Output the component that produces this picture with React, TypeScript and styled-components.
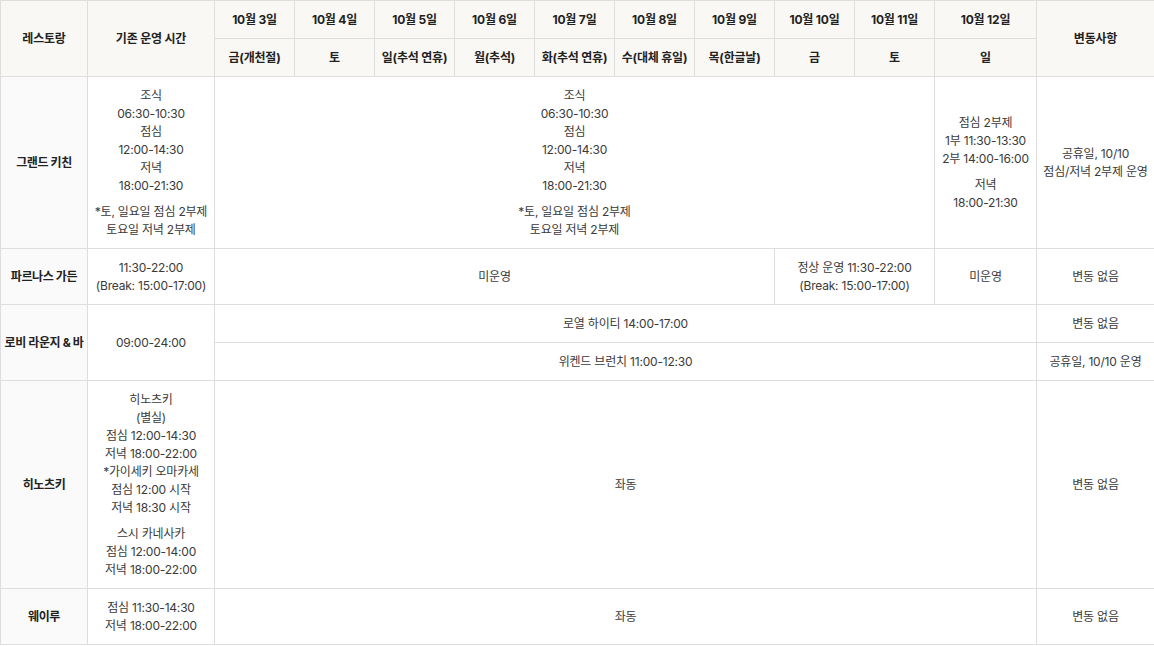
import styled, { createGlobalStyle } from "styled-components";

const GlobalStyle = createGlobalStyle`
    html, body {
        margin: 0;
        padding: 0;
        background: #fff;
    }
    body {
        font-family: Inter, "Noto Sans CJK KR", sans-serif;
        color: #333;
    }
`;

const Table = styled.table`
    width: 1154px;
    table-layout: fixed;
    border-collapse: collapse;
    font-size: 12px;
    line-height: 18px;
    letter-spacing: -0.2px;
    td, th {
        border: 1px solid #dedede;
        text-align: center;
        vertical-align: middle;
        padding: 10px 4px 9px;
    }
`;

const Head = styled.th`
    background: #f9f8f5;
    font-weight: 700;
    color: #222;
    height: 19px;
    padding: 9px 4px !important;
`;

const NameCell = styled.th`
    background: #fafafa;
    font-weight: 700;
    color: #222;
    white-space: nowrap;
    padding-left: 0 !important;
    padding-right: 0 !important;
    letter-spacing: -0.4px;
`;

const Cell = styled.td`
    color: #3a3a3a;
`;

const Block = styled.p`
    margin: 0;
    & + & {
        margin-top: 8px;
    }
`;

const days = ["3", "4", "5", "6", "7", "8", "9", "10", "11", "12"];
const weekdays = ["금(개천절)", "토", "일(추석 연휴)", "월(추석)", "화(추석 연휴)", "수(대체 휴일)", "목(한글날)", "금", "토", "일"];
const widths = [87, 127, 80, 80, 80, 80, 80, 80, 80, 80, 80, 102, 118];

function Lines({ blocks }: { blocks: string[][] }) {
    return (
        <>
            {blocks.map((b, i) => (
                <Block key={i}>
                    {b.map((l, j) => (
                        <span key={j}>{l}{j < b.length - 1 && <br />}</span>
                    ))}
                </Block>
            ))}
        </>
    );
}

const grandKitchen = [
    ["조식", "06:30-10:30", "점심", "12:00-14:30", "저녁", "18:00-21:30"],
    ["*토, 일요일 점심 2부제", "토요일 저녁 2부제"],
];

export default function App() {
    return (
        <>
            <GlobalStyle />
            <Table>
                <colgroup>
                    {widths.map((w, i) => <col key={i} style={{ width: w }} />)}
                </colgroup>
                <thead>
                    <tr>
                        <Head rowSpan={2}>레스토랑</Head>
                        <Head rowSpan={2}>기존 운영 시간</Head>
                        {days.map(d => <Head key={d}>10월 {d}일</Head>)}
                        <Head rowSpan={2}>변동사항</Head>
                    </tr>
                    <tr>
                        {weekdays.map((w, i) => <Head key={i}>{w}</Head>)}
                    </tr>
                </thead>
                <tbody>
                    <tr>
                        <NameCell>그랜드 키친</NameCell>
                        <Cell><Lines blocks={grandKitchen} /></Cell>
                        <Cell colSpan={9}><Lines blocks={grandKitchen} /></Cell>
                        <Cell><Lines blocks={[["점심 2부제", "1부 11:30-13:30", "2부 14:00-16:00"], ["저녁", "18:00-21:30"]]} /></Cell>
                        <Cell><Lines blocks={[["공휴일, 10/10", "점심/저녁 2부제 운영"]]} /></Cell>
                    </tr>
                    <tr>
                        <NameCell>파르나스 가든</NameCell>
                        <Cell><Lines blocks={[["11:30-22:00", "(Break: 15:00-17:00)"]]} /></Cell>
                        <Cell colSpan={7}>미운영</Cell>
                        <Cell colSpan={2}><Lines blocks={[["정상 운영 11:30-22:00", "(Break: 15:00-17:00)"]]} /></Cell>
                        <Cell>미운영</Cell>
                        <Cell>변동 없음</Cell>
                    </tr>
                    <tr>
                        <NameCell rowSpan={2}>로비 라운지 &amp; 바</NameCell>
                        <Cell rowSpan={2}>09:00-24:00</Cell>
                        <Cell colSpan={10}>로열 하이티 14:00-17:00</Cell>
                        <Cell>변동 없음</Cell>
                    </tr>
                    <tr>
                        <Cell colSpan={10}>위켄드 브런치 11:00-12:30</Cell>
                        <Cell>공휴일, 10/10 운영</Cell>
                    </tr>
                    <tr>
                        <NameCell>히노츠키</NameCell>
                        <Cell>
                            <Lines blocks={[
                                ["히노츠키", "(별실)", "점심 12:00-14:30", "저녁 18:00-22:00", "*가이세키 오마카세", "점심 12:00 시작", "저녁 18:30 시작"],
                                ["스시 카네사카", "점심 12:00-14:00", "저녁 18:00-22:00"],
                            ]} />
                        </Cell>
                        <Cell colSpan={10}>좌동</Cell>
                        <Cell>변동 없음</Cell>
                    </tr>
                    <tr>
                        <NameCell>웨이루</NameCell>
                        <Cell><Lines blocks={[["점심 11:30-14:30", "저녁 18:00-22:00"]]} /></Cell>
                        <Cell colSpan={10}>좌동</Cell>
                        <Cell>변동 없음</Cell>
                    </tr>
                </tbody>
            </Table>
        </>
    );
}
